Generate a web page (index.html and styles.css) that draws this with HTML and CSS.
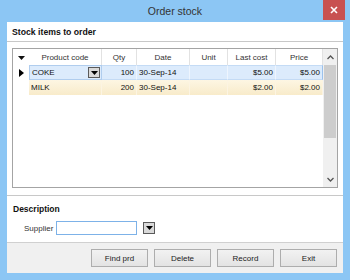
FILE: index.html
```html
<!DOCTYPE html>
<html lang="en">
<head>
    <meta charset="UTF-8" />
    <title>Order stock</title>
    <link rel="stylesheet" href="styles.css">
</head>
<body>
    <div class="window">
        <div class="titlebar">
            <span></span>
            <span class="title">Order stock</span>
            <button class="close">
                <svg width="8" height="8" viewBox="0 0 8 8"><path d="M1 1L7 7M7 1L1 7" stroke="#fff" stroke-width="1.6"/></svg>
            </button>
        </div>
        <div class="client">
            <div class="section-head">Stock items to order</div>
            <div class="grid-area">
                <div class="grid">
                    <div class="rows">
                        <div class="row header">
                            <div class="cell ind">
                                <svg width="7" height="4" viewBox="0 0 7 4"><path d="M0 0H7L3.5 4Z" fill="#111"/></svg>
                            </div>
                            <div class="cell center">Product code</div>
                            <div class="cell center">Qty</div>
                            <div class="cell center">Date</div>
                            <div class="cell center">Unit</div>
                            <div class="cell center">Last cost</div>
                            <div class="cell center">Price</div>
                        </div>
                        <div class="row current">
                            <div class="cell ind">
                                <svg width="5" height="8" viewBox="0 0 5 8"><path d="M0 0V8L5 4Z" fill="#000"/></svg>
                            </div>
                            <div class="cell editor">
                                <span>COKE</span>
                                <span class="drop">
                                    <svg width="7" height="4" viewBox="0 0 7 4"><path d="M0 0H7L3.5 4Z" fill="#000"/></svg>
                                </span>
                            </div>
                            <div class="cell right">100</div>
                            <div class="cell">30-Sep-14</div>
                            <div class="cell"></div>
                            <div class="cell right">$5.00</div>
                            <div class="cell right">$5.00</div>
                        </div>
                        <div class="row alt">
                            <div class="cell ind"></div>
                            <div class="cell">MILK</div>
                            <div class="cell right">200</div>
                            <div class="cell">30-Sep-14</div>
                            <div class="cell"></div>
                            <div class="cell right">$2.00</div>
                            <div class="cell right">$2.00</div>
                        </div>
                    </div>
                    <div class="scrollbar">
                        <div class="arrow">
                            <svg width="7" height="5" viewBox="0 0 7 5"><path d="M0.5 4L3.5 1L6.5 4" stroke="#555" stroke-width="1.3" fill="none"/></svg>
                        </div>
                        <div class="thumb"></div>
                        <div class="track"></div>
                        <div class="arrow">
                            <svg width="7" height="5" viewBox="0 0 7 5"><path d="M0.5 1L3.5 4L6.5 1" stroke="#555" stroke-width="1.3" fill="none"/></svg>
                        </div>
                    </div>
                </div>
            </div>
            <div class="desc">
                <div class="desc-head">Description</div>
                <div class="field">
                    <label>Supplier</label>
                    <input type="text" class="supplier" />
                    <span class="drop big">
                        <svg width="7" height="4" viewBox="0 0 7 4"><path d="M0 0H7L3.5 4Z" fill="#000"/></svg>
                    </span>
                </div>
            </div>
            <div class="buttonbar">
                <button class="btn">Find prd</button>
                <button class="btn">Delete</button>
                <button class="btn">Record</button>
                <button class="btn">Exit</button>
            </div>
        </div>
    </div>
</body>
</html>
```

FILE: styles.css
```css
* {
    box-sizing: border-box;
}
body {
    margin: 0;
    width: 350px;
    height: 280px;
    background: #8cc6f4;
    font-family: 'Liberation Sans', Arial, sans-serif;
    font-size: 8px;
    color: #111;
    overflow: hidden;
}
.window {
    height: 280px;
    display: flex;
    flex-direction: column;
}
.titlebar {
    height: 22px;
    display: grid;
    grid-template-columns: 1fr auto 1fr;
    align-items: start;
}
.title {
    font-size: 10.5px;
    color: #333;
    padding-top: 5px;
}
.close {
    justify-self: end;
    margin-right: 5px;
    width: 22px;
    height: 20px;
    border: none;
    padding: 0;
    background: #c85151;
    display: flex;
    align-items: center;
    justify-content: center;
}
.client {
    flex: 1;
    margin: 0 7px 7px 7px;
    background: #fff;
    display: flex;
    flex-direction: column;
}
.section-head {
    height: 20px;
    font-weight: bold;
    font-size: 8.7px;
    padding: 5px 0 0 5px;
    border-bottom: 1px solid #c8c8c8;
}
.grid-area {
    padding: 6px 5px 7px 5px;
    border-bottom: 1px solid #c8c8c8;
}
.grid {
    height: 140px;
    border: 1px solid #a4a4a4;
    display: flex;
}
.rows {
    flex: 1;
}
.row {
    display: grid;
    grid-template-columns: 16px 73px 35px 53px 38px 48px 47px;
    height: 15px;
}
.row.header {
    height: 16px;
    color: #333;
}
.cell {
    display: flex;
    align-items: center;
    padding: 0 2px;
    border-right: 1px solid #e6e6e6;
    white-space: nowrap;
}
.header .cell {
    border-right: 1px solid #e2e2e2;
    padding-top: 1px;
}
.cell.center {
    justify-content: center;
}
.cell.right {
    justify-content: flex-end;
}
.cell.ind {
    justify-content: center;
    border-right: none;
}
.current .cell:not(.ind) {
    background: #dcebfc;
    border-right: 1px solid #eef5fe;
    border-top: 1px solid #c4dbf5;
    border-bottom: 1px solid #c4dbf5;
}
.current .cell:last-child {
    border-right: 1px solid #9cc2ec;
}
.current .cell.editor {
    justify-content: space-between;
    border: 1px solid #b0cdee;
    padding-right: 1px;
}
.alt .cell:not(.ind) {
    background: linear-gradient(#fdf6e3, #f8ebca);
    border-right: 1px solid #fcf4e2;
}
.drop {
    width: 12px;
    height: 11px;
    background: #d9d9d9;
    border: 1px solid #5a5a5a;
    display: inline-flex;
    align-items: center;
    justify-content: center;
}
.scrollbar {
    width: 14px;
    background: #f0f0f0;
    display: flex;
    flex-direction: column;
    align-items: center;
}
.arrow {
    height: 16px;
    display: flex;
    align-items: center;
    justify-content: center;
}
.thumb {
    width: 12px;
    height: 73px;
    background: #cdcdcd;
}
.track {
    flex: 1;
}
.desc {
    height: 47px;
    border-bottom: 1px solid #d0d0d0;
}
.desc-head {
    font-weight: bold;
    font-size: 8.5px;
    padding: 8px 0 0 6px;
}
.field {
    display: flex;
    align-items: center;
    margin-top: 7px;
    padding-left: 17px;
}
.field label {
    color: #333;
    width: 32px;
}
.supplier {
    width: 81px;
    height: 14px;
    border: 1px solid #7db2e8;
    padding: 0;
    margin: 0 6px 0 0;
    outline: none;
}
.drop.big {
    width: 12px;
    height: 12px;
}
.buttonbar {
    flex: 1;
    background: #f0f0f0;
    display: flex;
    justify-content: flex-end;
    align-items: center;
    gap: 6px;
    padding-right: 6px;
}
.btn {
    width: 57px;
    height: 18px;
    font-family: 'Liberation Sans', Arial, sans-serif;
    font-size: 8px;
    color: #222;
    border: 1px solid #adadad;
    background: linear-gradient(#f2f2f2, #e3e3e3);
    padding: 0;
}
```
